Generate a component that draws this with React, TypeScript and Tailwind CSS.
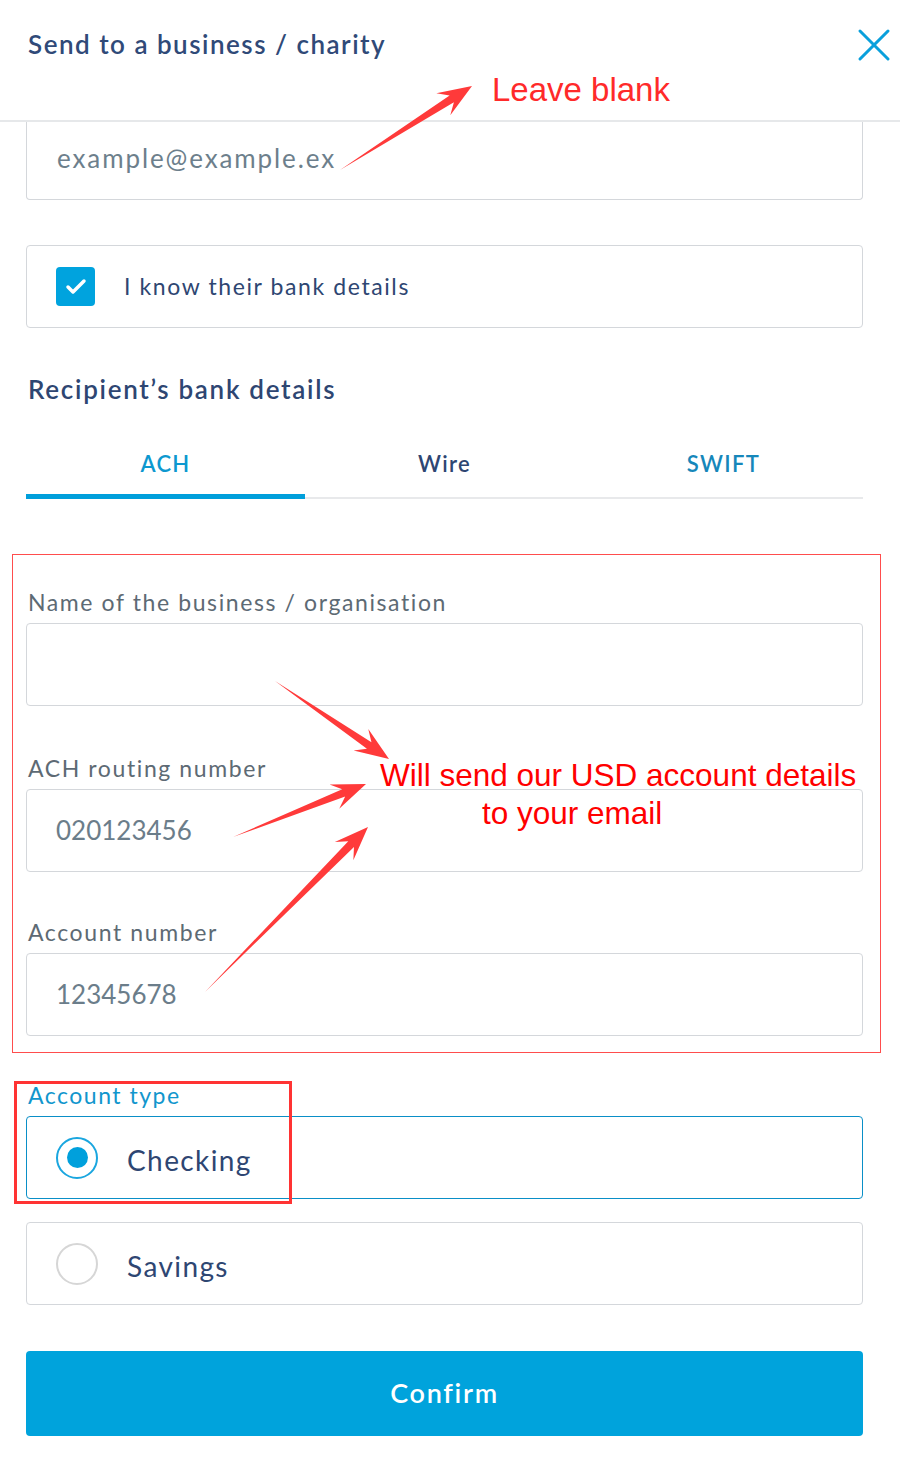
import { X, Check } from 'lucide-react'

const arrowPoints = (x1: number, y1: number, x2: number, y2: number) => {
  const dx = x2 - x1
  const dy = y2 - y1
  const len = Math.hypot(dx, dy)
  const ux = dx / len
  const uy = dy / len
  const nx = -uy
  const ny = ux
  const head = 34
  const notch = 24
  const hw = 13
  const sw = 4
  const p = (t: number, w: number) => `${x1 + ux * t + nx * w},${y1 + uy * t + ny * w}`
  return [
    p(0, 0),
    p(len - notch, sw),
    p(len - head, hw),
    p(len, 0),
    p(len - head, -hw),
    p(len - notch, -sw),
  ].join(' ')
}

const arrows = [
  [340, 170, 472, 86],
  [275, 681, 389, 759],
  [233, 837, 366, 784],
  [205, 992, 368, 827],
]

const Field = ({ label, value, className = '' }: { label: string; value?: string; className?: string }) => (
  <div className={className}>
    <p className="pl-[2px] text-[23px] leading-[28px] tracking-[1.6px] text-[#5d6a74]">{label}</p>
    <div className="mt-[7px] flex h-[83px] items-center rounded-[4px] border border-[#d4d7db] px-[29px] text-[26px] text-[#6b7d8a]">
      {value}
    </div>
  </div>
)

const Radio = ({ label, checked }: { label: string; checked?: boolean }) => (
  <div
    className={`flex h-[83px] items-center gap-[29px] rounded-[4px] border px-[29px] ${
      checked ? 'border-[#0a8fc7]' : 'border-[#d4d7db]'
    }`}
  >
    <span
      className={`flex h-[42px] w-[42px] items-center justify-center rounded-full border-2 ${
        checked ? 'border-[#1aa6df]' : 'border-[#d6d6d6]'
      }`}
    >
      {checked && <span className="h-[21px] w-[21px] rounded-full bg-[#00a0dc]" />}
    </span>
    <span className="pt-[5px] text-[28px] tracking-[1.4px] text-[#2e4672]">{label}</span>
  </div>
)

export default function App() {
  return (
    <div className="relative h-[1464px] w-[900px] overflow-hidden bg-white font-['Lato','Open_Sans',sans-serif]">
      <header className="flex h-[122px] items-start justify-between border-b-2 border-[#e6e8ea] pl-[28px] pt-[26px]">
        <h1 className="text-[26px] font-semibold leading-[36px] tracking-[1.5px] text-[#304a78]">
          Send to a business / charity
        </h1>
        <X className="-mr-[2px] -mt-[9px] h-[56px] w-[56px] text-[#0aa0dc]" strokeWidth={1.3} />
      </header>

      <div className="px-[26px] pr-[37px]">
        <div className="flex h-[78px] items-center rounded-b-[4px] border border-t-0 border-[#d4d7db] px-[30px] pb-[4px] text-[26px] tracking-[1.9px] text-[#6d7f8c]">
          example@example.ex
        </div>

        <div className="mt-[45px] flex h-[83px] items-center gap-[29px] rounded-[4px] border border-[#d4d7db] px-[29px]">
          <span className="flex h-[39px] w-[39px] items-center justify-center rounded-[4px] bg-[#00a3de]">
            <Check className="h-[24px] w-[24px] text-white" strokeWidth={3.5} />
          </span>
          <span className="text-[23px] tracking-[1.6px] text-[#2e4672]">I know their bank details</span>
        </div>

        <h2 className="mt-[43px] pl-[2px] text-[26px] font-semibold leading-[36px] tracking-[1.7px] text-[#2e4672]">
          Recipient&rsquo;s bank details
        </h2>

        <div className="mt-[26px] flex items-end text-[22px] font-semibold tracking-[1.3px]">
          <div className="flex h-[66px] flex-1 items-center justify-center border-b-[5px] border-[#009fdb] text-[#0d98cf]">
            ACH
          </div>
          <div className="flex h-[66px] flex-1 items-center justify-center border-b-2 border-[#e8e9eb] pb-[3px] text-[#2e4672]">
            Wire
          </div>
          <div className="flex h-[66px] flex-1 items-center justify-center border-b-2 border-[#e8e9eb] pb-[3px] text-[#1687ba]">
            SWIFT
          </div>
        </div>

        <Field className="mt-[89px]" label="Name of the business / organisation" />
        <Field className="mt-[48px]" label="ACH routing number" value="020123456" />
        <Field className="mt-[46px]" label="Account number" value="12345678" />

        <p className="mt-[45px] pl-[2px] text-[23px] leading-[28px] tracking-[1.5px] text-[#1196cd]">Account type</p>
        <div className="mt-[7px]">
          <Radio label="Checking" checked />
        </div>
        <div className="mt-[23px]">
          <Radio label="Savings" />
        </div>

        <button className="mt-[46px] flex h-[85px] w-full items-center justify-center rounded-[4px] bg-[#00a3dc] text-[27px] font-semibold tracking-[1.7px] text-white">
          Confirm
        </button>
      </div>

      {/* annotations */}
      <div className="pointer-events-none absolute left-[12px] top-[554px] h-[499px] w-[869px] border border-[#ff4d4d]" />
      <div className="pointer-events-none absolute left-[14px] top-[1081px] h-[123px] w-[278px] border-[3px] border-[#ff3333]" />

      <p className="absolute left-[492px] top-[70px] font-['Liberation_Sans',Arial,sans-serif] text-[33px] leading-[40px] text-[#ff2a2a]">
        Leave blank
      </p>
      <div className="absolute left-[380px] top-[756px] font-['Liberation_Sans',Arial,sans-serif] text-[31.5px] leading-[38px] text-[#ff0000]">
        <p>Will send our USD account details</p>
        <p className="pl-[102px]">to your email</p>
      </div>

      <svg className="pointer-events-none absolute left-0 top-0" width="900" height="1464">
        {arrows.map(([a, b, c, d], i) => (
          <polygon key={i} points={arrowPoints(a, b, c, d)} fill="#ff3a3a" />
        ))}
      </svg>
    </div>
  )
}
